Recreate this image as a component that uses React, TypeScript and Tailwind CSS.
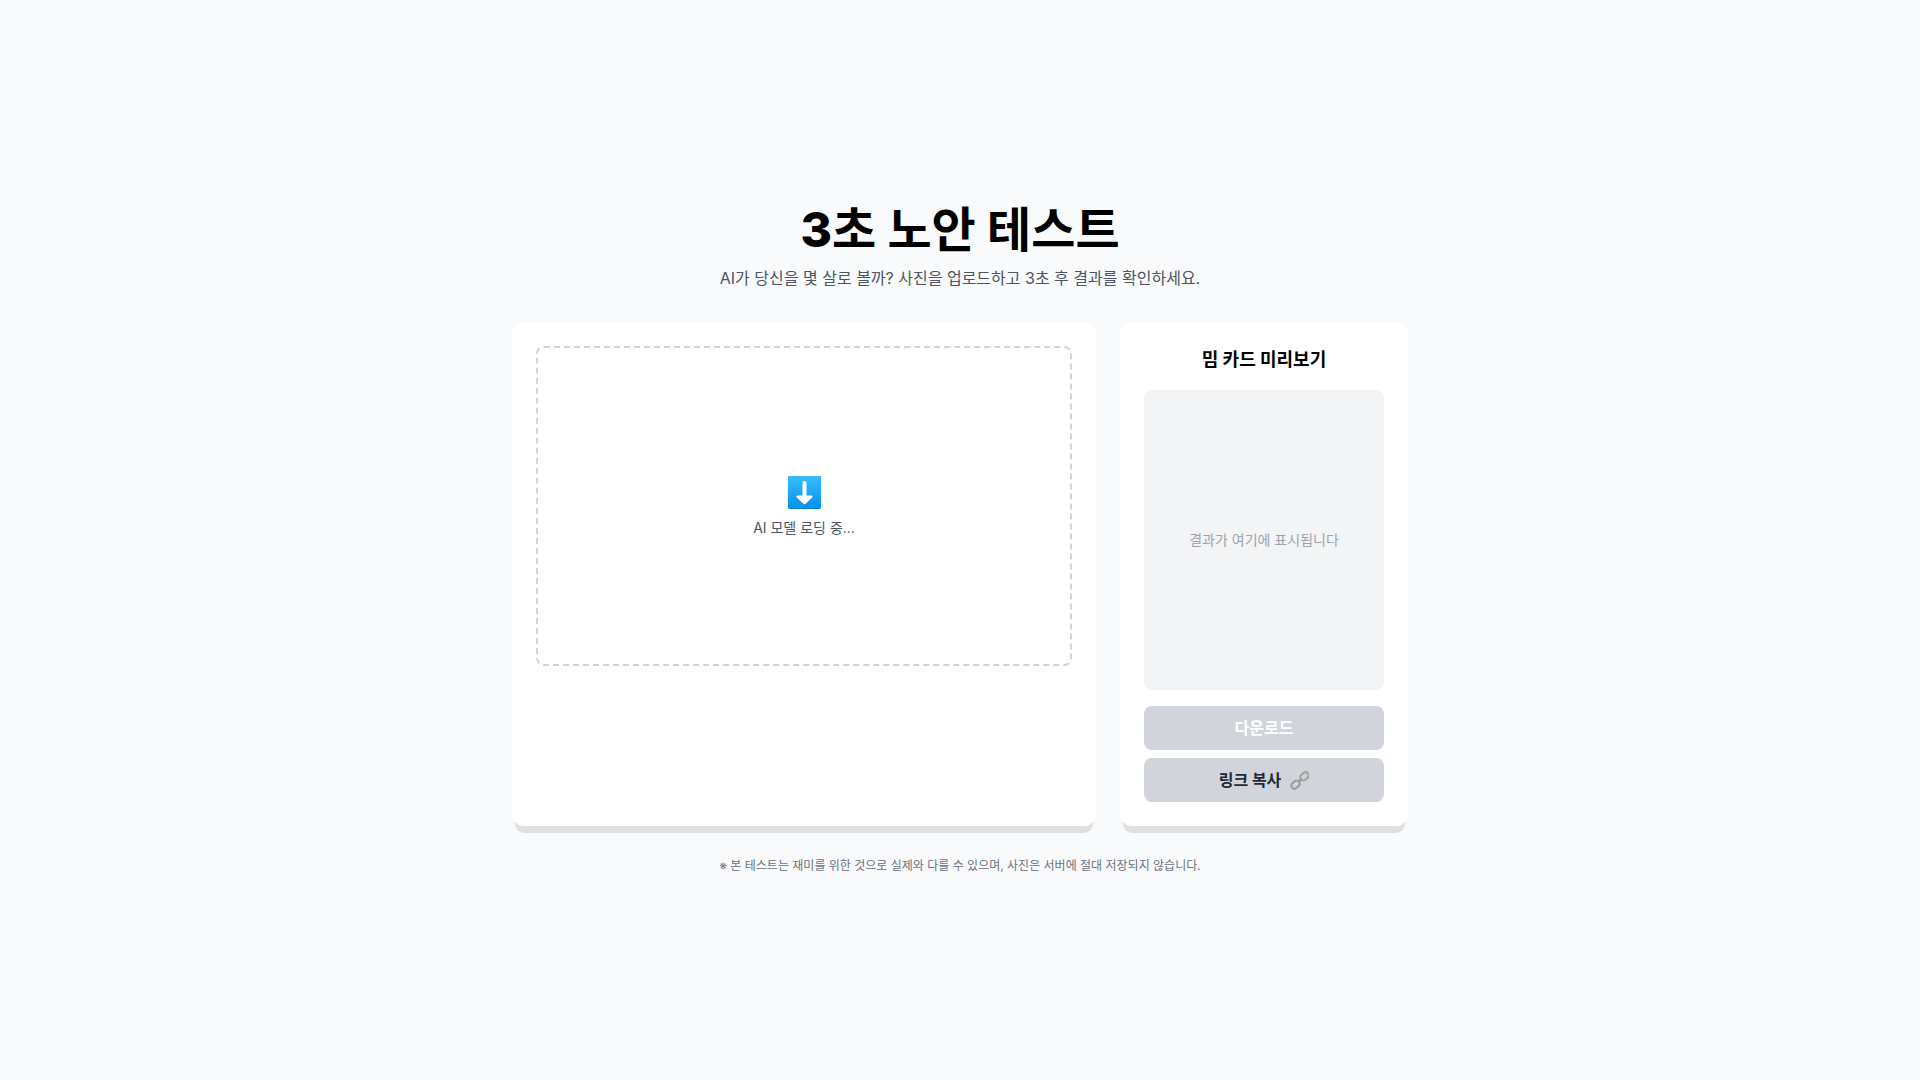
function DownArrowIcon() {
  return (
    <svg viewBox="0 0 36 36" className="size-9" role="img" aria-label="업로드">
      <defs>
        <linearGradient id="tile" x1="0" y1="0" x2="0" y2="1">
          <stop offset="0" stopColor="#38bdfb" />
          <stop offset="1" stopColor="#0791ee" />
        </linearGradient>
      </defs>
      <rect x="2" y="2" width="33" height="33" rx="2" fill="#0a7fd2" />
      <rect x="2" y="2" width="33" height="32.2" rx="2" fill="url(#tile)" />
      <path
        d="M18.500 7c1.200 0 2 .8 2 2v12.600h4.800c1.400 0 1.700 1 .9 1.900l-6.500 6.200c-.7.7-1.700.7-2.400 0l-6.500-6.200c-.8-.9-.5-1.900.9-1.900h4.800V9c0-1.200.8-2 2-2z"
        fill="#fff"
      />
    </svg>
  );
}

function LinkIcon() {
  return (
    <svg viewBox="0 0 20 20" className="size-5" aria-hidden="true" fill="none">
      <g transform="rotate(-43 11 10.500)">
        <rect x="0.300" y="7.400" width="9.200" height="6.200" rx="3.100" stroke="#9f9f9f" strokeWidth="2.200" />
        <rect x="12.500" y="7.400" width="9.200" height="6.200" rx="3.100" stroke="#a4a4a4" strokeWidth="2.200" />
        <path d="M9 10.500h4" stroke="#9a9a9a" strokeWidth="2.600" />
      </g>
    </svg>
  );
}

export default function App() {
  return (
    <main className="flex min-h-screen flex-col items-center justify-center bg-[#f9fafb] p-4 font-['Inter','Noto_Sans_CJK_KR',sans-serif] text-[#1f2937]">
      <div className="w-full max-w-4xl">
        <header className="mb-8 text-center">
          <h1 className="text-5xl font-bold text-black">
            <span className="font-extrabold">3</span>초 노안 테스트
          </h1>
          <p className="mt-3 text-base text-[#4b5563]">
            AI가 당신을 몇 살로 볼까? 사진을 업로드하고 3초 후 결과를 확인하세요.
          </p>
        </header>

        <div className="flex flex-col gap-6 md:flex-row">
          <section className="flex-1 rounded-xl bg-white p-6 shadow-[0_10px_0_-3px_rgba(0,0,0,0.1)]">
            <div className="flex h-80 flex-col items-center justify-center rounded-lg border-2 border-dashed border-[#d1d5db]">
              <DownArrowIcon />
              <p className="mt-2 text-sm text-[#4b5563]">AI 모델 로딩 중...</p>
            </div>
          </section>

          <aside className="rounded-xl bg-white p-6 shadow-[0_10px_0_-3px_rgba(0,0,0,0.1)] md:w-72">
            <h2 className="mb-4 text-center text-lg font-bold text-black">밈 카드 미리보기</h2>
            <div className="flex h-75 items-center justify-center rounded-lg bg-[#f3f4f6]">
              <p className="text-sm text-[#9ca3af]">결과가 여기에 표시됩니다</p>
            </div>
            <div className="mt-4 flex flex-col gap-2">
              <button type="button" disabled className="h-11 rounded-lg bg-[#d1d5db] font-bold text-white">
                다운로드
              </button>
              <button
                type="button"
                className="flex h-11 items-center justify-center gap-2 rounded-lg bg-[#d1d5db] font-bold text-[#1f2937]"
              >
                링크 복사
                <LinkIcon />
              </button>
            </div>
          </aside>
        </div>

        <footer className="mt-8 text-center text-xs text-[#6b7280]">
          ※ 본 테스트는 재미를 위한 것으로 실제와 다를 수 있으며, 사진은 서버에 절대 저장되지 않습니다.
        </footer>
      </div>
    </main>
  );
}
